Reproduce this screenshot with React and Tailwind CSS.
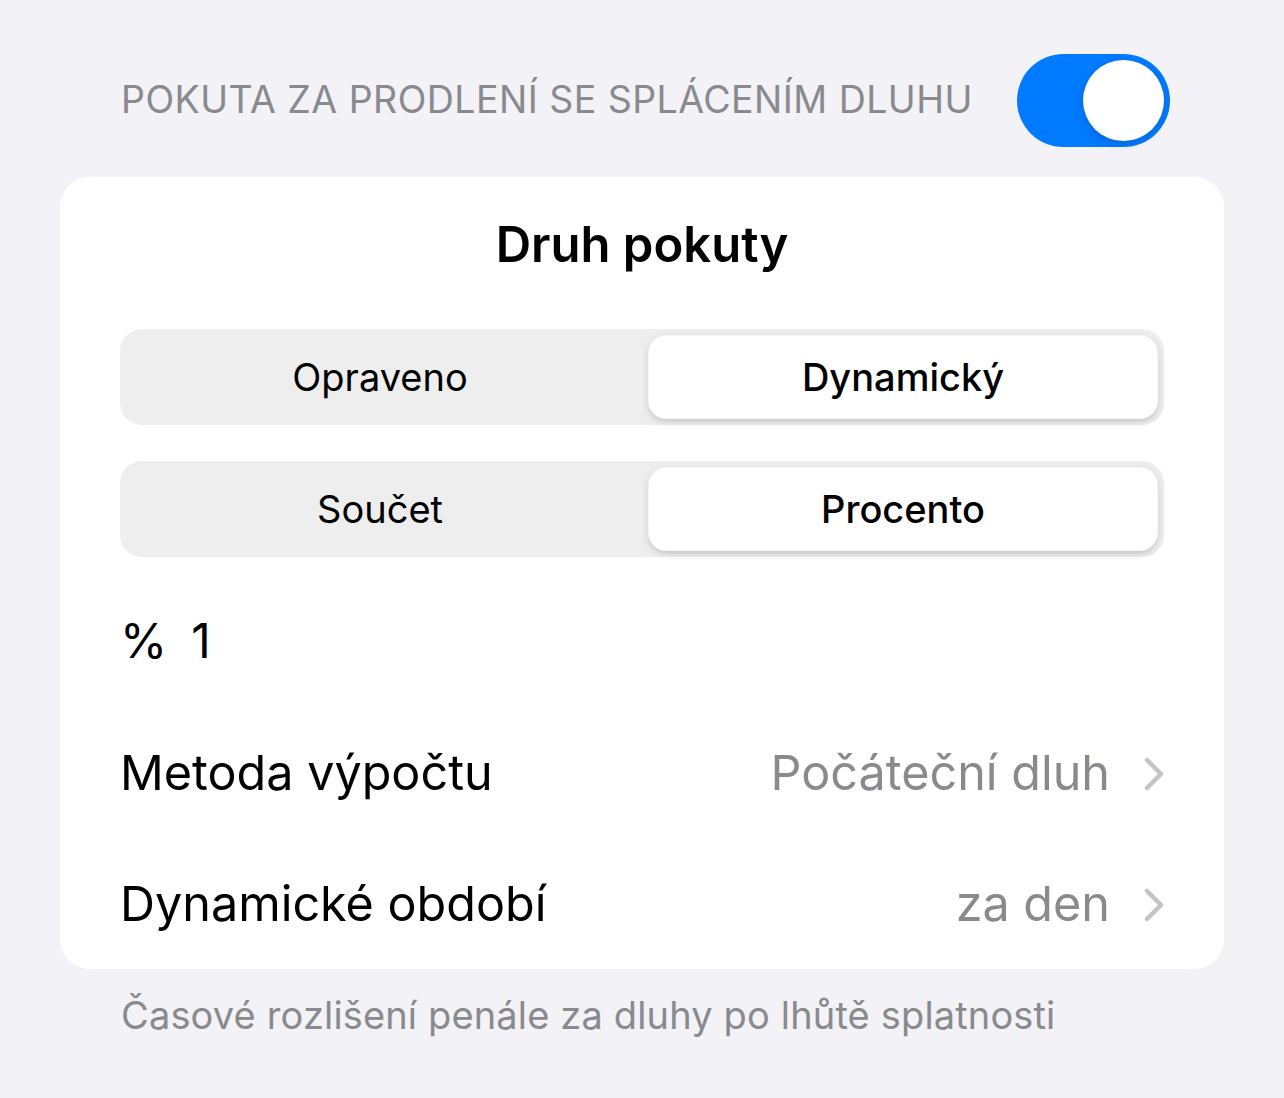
import React from "react";

function Chevron() {
  return (
    <svg width="20" height="34" viewBox="0 0 20 34" fill="none" className="ml-[34px]">
      <path d="M3 3 L17 17 L3 31" stroke="#c4c4c7" strokeWidth="4.5" strokeLinecap="round" strokeLinejoin="round" />
    </svg>
  );
}

function Segmented({ left, right }) {
  return (
    <div className="flex h-[96px] w-full rounded-[22px] bg-[#eeeeef] p-[6px]">
      <div className="flex flex-1 items-center justify-center pr-[14px] text-[38px] text-black">{left}</div>
      <div className="flex w-[510px] items-center justify-center rounded-[18px] border border-[rgba(0,0,0,0.04)] bg-white text-[38px] font-medium text-black shadow-[0_3px_8px_rgba(0,0,0,0.12),0_3px_1px_rgba(0,0,0,0.04)]">
        {right}
      </div>
    </div>
  );
}

export default function App() {
  return (
    <div
      className="min-h-[1098px] w-[1284px] bg-[#f2f2f7] px-[60px] pt-[54px]"
      style={{ fontFamily: "Inter, 'Noto Sans', 'Liberation Sans', sans-serif" }}
    >
      <div className="flex items-center justify-between pl-[61px] pr-[54px]">
        <div className="text-[37.5px] tracking-[0.45px] text-[#8a8a8e]">POKUTA ZA PRODLENÍ SE SPLÁCENÍM DLUHU</div>
        <div className="flex h-[93px] w-[153px] items-center justify-end rounded-full bg-[#007aff] px-[6px]">
          <div className="h-[81px] w-[81px] rounded-full bg-white shadow-[0_3px_8px_rgba(0,0,0,0.15)]" />
        </div>
      </div>

      <div className="mt-[30px] rounded-[30px] bg-white px-[60px]">
        <div className="flex h-[136px] items-center justify-center text-[49px] font-semibold text-black">
          Druh pokuty
        </div>
        <div className="mt-[16px]">
          <Segmented left="Opraveno" right="Dynamický" />
        </div>
        <div className="mt-[36px]">
          <Segmented left="Součet" right="Procento" />
        </div>
        <div className="flex h-[150px] items-center pt-[17px] text-[48px] text-black">
          <span>%</span>
          <span className="ml-[24px]">1</span>
        </div>
        <div className="flex h-[133px] items-center justify-between">
          <span className="text-[48.5px] text-black">Metoda výpočtu</span>
          <div className="flex items-center">
            <span className="text-[48.5px] text-[#8a8a8e]">Počáteční dluh</span>
            <Chevron />
          </div>
        </div>
        <div className="flex h-[129px] items-center justify-between">
          <span className="text-[48.5px] text-black">Dynamické období</span>
          <div className="flex items-center">
            <span className="text-[48.5px] text-[#8a8a8e]">za den</span>
            <Chevron />
          </div>
        </div>
      </div>

      <div className="pl-[61px] pt-[18px] text-[38px] tracking-[0.15px] text-[#8a8a8e]">
        Časové rozlišení penále za dluhy po lhůtě splatnosti
      </div>
    </div>
  );
}
